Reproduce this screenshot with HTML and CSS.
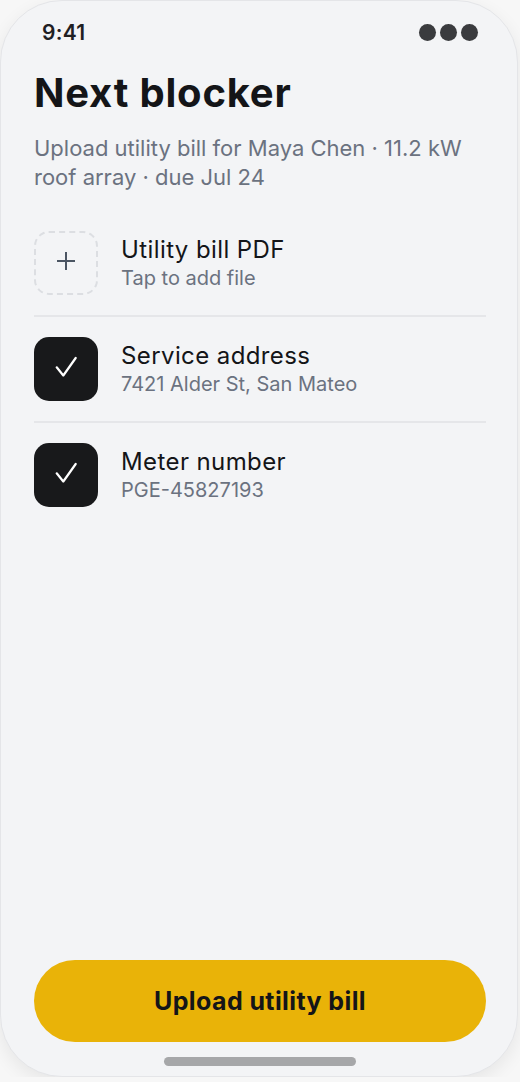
FILE: index.html
```html
<!DOCTYPE html>
<html lang="en">
<head>
<meta charset="utf-8">
<title>Next blocker</title>
<link rel="stylesheet" href="styles.css">
</head>
<body>
<div class="phone">
  <div class="status">
    <span class="time">9:41</span>
    <span class="dots"><i></i><i></i><i></i></span>
  </div>
  <h1 class="title">Next blocker</h1>
  <p class="lead">Upload utility bill for Maya Chen · 11.2 kW roof array · due Jul 24</p>
  <ul class="list">
    <li class="row">
      <span class="box box-empty">
        <svg width="20" height="20" viewBox="0 0 20 20"><path d="M10 1v18M1 10h18" stroke="#4b5563" stroke-width="2" fill="none"/></svg>
      </span>
      <span class="text">
        <span class="name">Utility bill PDF</span>
        <span class="sub">Tap to add file</span>
      </span>
    </li>
    <li class="row">
      <span class="box box-done">
        <svg width="64" height="64" viewBox="0 0 64 64"><path d="M22.7 30.3L29.3 38.5L41.7 21" stroke="#fff" stroke-width="2.2" fill="none" stroke-linecap="round" stroke-linejoin="round"/></svg>
      </span>
      <span class="text">
        <span class="name">Service address</span>
        <span class="sub">7421 Alder St, San Mateo</span>
      </span>
    </li>
    <li class="row">
      <span class="box box-done">
        <svg width="64" height="64" viewBox="0 0 64 64"><path d="M22.7 30.3L29.3 38.5L41.7 21" stroke="#fff" stroke-width="2.2" fill="none" stroke-linecap="round" stroke-linejoin="round"/></svg>
      </span>
      <span class="text">
        <span class="name">Meter number</span>
        <span class="sub">PGE-45827193</span>
      </span>
    </li>
  </ul>
  <div class="spacer"></div>
  <button class="cta">Upload utility bill</button>
  <div class="home"></div>
</div>
</body>
</html>
```
FILE: styles.css
```css
* { box-sizing: border-box; }
html, body { margin: 0; padding: 0; }
body {
  background: #f7f7f7;
  font-family: Inter, "Noto Sans", sans-serif;
  color: #141518;
}
.phone {
  width: 518px;
  height: 1077px;
  background: #f3f4f6;
  border: 1px solid #e4e5e8;
  border-radius: 62px;
  box-shadow: 0 6px 18px rgba(0,0,0,0.07);
  display: flex;
  flex-direction: column;
  padding: 17px 31px 0 33px;
  overflow: hidden;
}
.status {
  height: 28px;
  display: flex;
  align-items: center;
  justify-content: space-between;
  padding: 0 8px;
}
.time {
  font-size: 21px;
  font-weight: 600;
  letter-spacing: 0.3px;
  color: #1f2023;
}
.dots { display: flex; gap: 4px; }
.dots i {
  display: block;
  width: 17px;
  height: 17px;
  border-radius: 50%;
  background: #3a3b3e;
}
.title {
  margin: 23px 0 0;
  font-size: 40px;
  line-height: 48px;
  font-weight: 700;
  letter-spacing: 0.8px;
  color: #141518;
}
.lead {
  margin: 17px 0 0;
  font-size: 22px;
  line-height: 29px;
  color: #6b7280;
}
.list {
  list-style: none;
  margin: 19px 0 0;
  padding: 0;
}
.row {
  display: flex;
  align-items: center;
  gap: 23px;
  padding: 20px 0;
}
.row + .row { border-top: 2px solid #e5e6e9; }
.box {
  width: 64px;
  height: 64px;
  border-radius: 15px;
  flex: none;
  display: flex;
  align-items: center;
  justify-content: center;
}
.box-empty {
  border: 2px dashed #dcdee2;
  padding-bottom: 5px;
}
.box-done { background: #18191b; }
.box-done svg { display: block; }
.text { display: flex; flex-direction: column; }
.name {
  font-size: 24px;
  line-height: 30px;
  letter-spacing: 0.4px;
  color: #141518;
}
.sub {
  font-size: 20px;
  line-height: 26px;
  color: #6b7280;
}
.spacer { flex: 1; }
.cta {
  height: 82px;
  border: none;
  border-radius: 41px;
  background: #e9b308;
  font-family: Inter, "Noto Sans", sans-serif;
  font-size: 25px;
  font-weight: 700;
  letter-spacing: 0.4px;
  color: #141518;
  width: 100%;
}
.home {
  width: 192px;
  height: 9px;
  border-radius: 5px;
  background: #a6a7a9;
  margin: 15px auto 10px;
}
```
